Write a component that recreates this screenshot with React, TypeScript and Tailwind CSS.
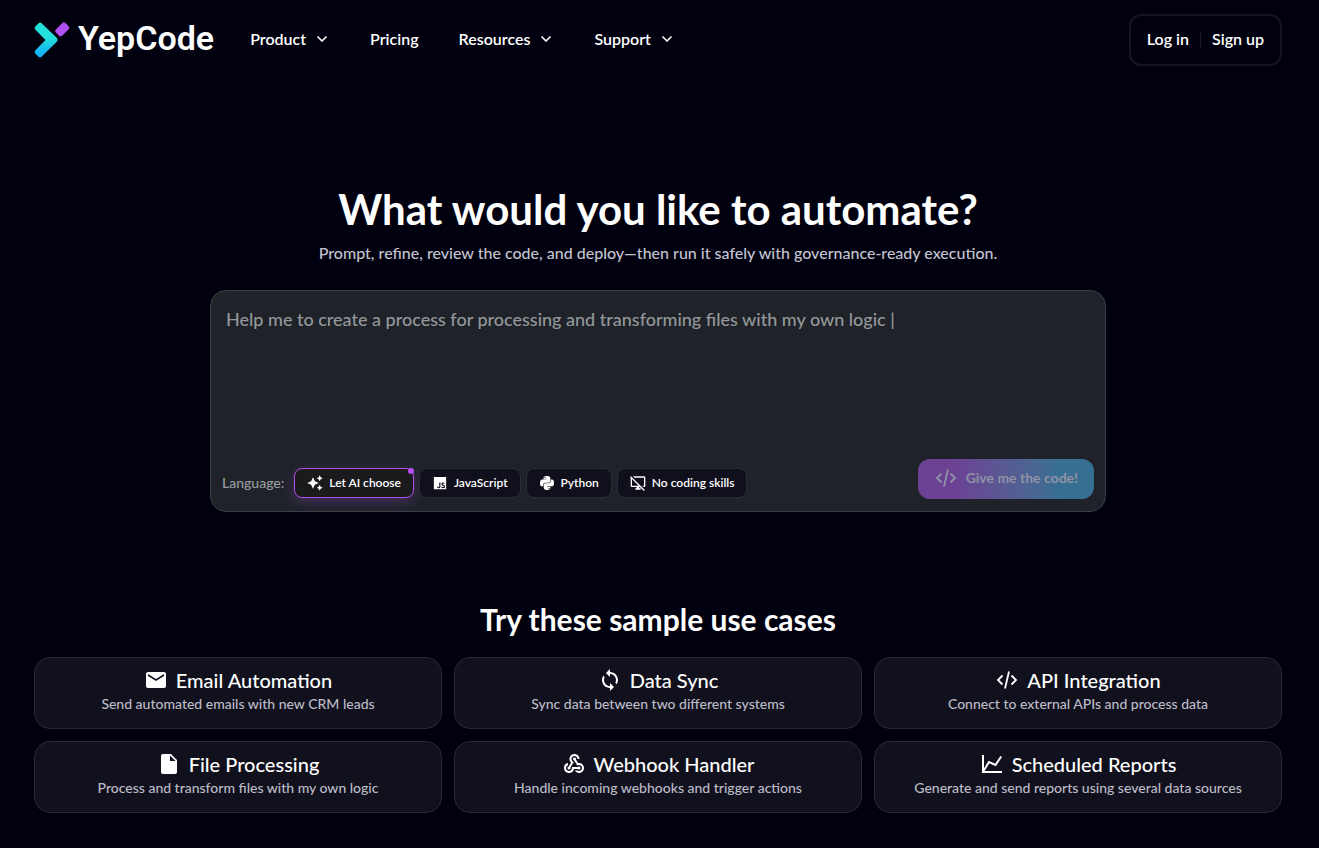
import { useState } from 'react'
import type { ReactNode } from 'react'
import { ChevronDown } from 'lucide-react'
import { FaPython } from 'react-icons/fa'
import { IoLogoJavascript } from 'react-icons/io5'
import {
  MdEmail,
  MdInsertDriveFile,
  MdOutlineDesktopAccessDisabled,
  MdSync,
  MdWebhook,
} from 'react-icons/md'

interface NavItem {
  label: string
  hasMenu?: boolean
}

interface Option {
  id: string
  label: string
  icon: ReactNode
}

interface UseCase {
  title: string
  description: string
  icon: ReactNode
}

function Logo() {
  return (
    <svg viewBox="0 0 36 36" className="size-9" fill="none" aria-hidden="true">
      <defs>
        <linearGradient id="arrow" x1="12" y1="0" x2="12" y2="36" gradientUnits="userSpaceOnUse">
          <stop offset="0.45" stopColor="#22e0dc" />
          <stop offset="0.85" stopColor="#12b4f4" />
        </linearGradient>
      </defs>
      <path
        d="M1.2 4.800 4.600 1.200Q6.100 0 7.600 1.200L22.500 15.500Q24.500 17.800 22.500 20.100L7.500 34.700Q6 36 4.500 34.700L1.200 31.400Q0 30 1.200 28.600L11.500 18 1.200 7.600Q0 6.200 1.200 4.800Z"
        fill="url(#arrow)"
      />
      <rect x="21.500" y="3.200" width="13.500" height="8.800" rx="2.200" transform="rotate(-45 28 7.500)" fill="#b150f0" />
    </svg>
  )
}

function CodeIcon({ className }: { className?: string }) {
  return (
    <svg viewBox="0 0 24 24" className={className} fill="none" stroke="currentColor" strokeWidth="1.8" aria-hidden="true">
      <path d="M7.500 7.500 3 12l4.500 4.500M16.500 7.500 21 12l-4.500 4.500M14 3.500l-4 17" />
    </svg>
  )
}

function ChartIcon({ className }: { className?: string }) {
  return (
    <svg viewBox="0 0 24 24" className={className} fill="none" stroke="currentColor" strokeWidth="2" aria-hidden="true">
      <path d="M3 3v17h19" />
      <path d="M3.500 19 9 10l6.500 3L21.200 4.500" />
    </svg>
  )
}

function SparklesIcon({ className }: { className?: string }) {
  return (
    <svg viewBox="0 0 24 24" className={className} fill="currentColor" aria-hidden="true">
      <path d="M9 3.500l2.800 5.700L17.500 12l-5.700 2.800L9 20.500l-2.800-5.700L.5 12l5.700-2.800z" />
      <path d="M19 .5l1.500 3L23.500 5l-3 1.500L19 9.500l-1.500-3L14.500 5l3-1.500zM19 14.500l1.500 3 3 1.500-3 1.500-1.500 3-1.500-3-3-1.500 3-1.500z" />
    </svg>
  )
}

const navItems: NavItem[] = [
  { label: 'Product', hasMenu: true },
  { label: 'Pricing' },
  { label: 'Resources', hasMenu: true },
  { label: 'Support', hasMenu: true },
]

const languages: Option[] = [
  { id: 'ai', label: 'Let AI choose', icon: <SparklesIcon className="size-4" /> },
  { id: 'js', label: 'JavaScript', icon: <IoLogoJavascript className="mx-px size-[14px]" /> },
  { id: 'python', label: 'Python', icon: <FaPython className="size-4" /> },
  { id: 'none', label: 'No coding skills', icon: <MdOutlineDesktopAccessDisabled className="size-4" /> },
]

const useCases: UseCase[] = [
  {
    title: 'Email Automation',
    description: 'Send automated emails with new CRM leads',
    icon: <MdEmail className="size-6" />,
  },
  {
    title: 'Data Sync',
    description: 'Sync data between two different systems',
    icon: <MdSync className="size-6" />,
  },
  {
    title: 'API Integration',
    description: 'Connect to external APIs and process data',
    icon: <CodeIcon className="size-6" />,
  },
  {
    title: 'File Processing',
    description: 'Process and transform files with my own logic',
    icon: <MdInsertDriveFile className="size-6" />,
  },
  {
    title: 'Webhook Handler',
    description: 'Handle incoming webhooks and trigger actions',
    icon: <MdWebhook className="size-6" />,
  },
  {
    title: 'Scheduled Reports',
    description: 'Generate and send reports using several data sources',
    icon: <ChartIcon className="size-6" />,
  },
]

function Header() {
  return (
    <header className="flex items-center justify-between pt-[14px]">
      <div className="flex items-center gap-9">
        <a href="#" className="flex items-center gap-2">
          <Logo />
          <span className="pb-1 font-['Roboto',sans-serif] text-[34px] leading-9 font-semibold">YepCode</span>
        </a>
        <nav className="flex items-center gap-10 pb-[2px] text-base font-semibold">
          {navItems.map(item =>
            item.hasMenu ? (
              <button key={item.label} type="button" className="flex items-center gap-2">
                {item.label}
                <ChevronDown className="size-4" strokeWidth={2.5} />
              </button>
            ) : (
              <a key={item.label} href="#">
                {item.label}
              </a>
            )
          )}
        </nav>
      </div>
      <div className="flex h-[52px] items-center rounded-xl border-2 border-[#14151f] px-4 pb-[2px] text-base font-semibold">
        <a href="#">Log in</a>
        <span className="mx-[11px] h-4 w-px bg-[#1a1b26]" />
        <a href="#">Sign up</a>
      </div>
    </header>
  )
}

function LanguagePicker() {
  const [selected, setSelected] = useState('ai')

  return (
    <div className="flex items-center gap-[5px]">
      <span className="mr-[5px] text-sm font-medium text-[#999da1]">Language:</span>
      {languages.map(lang => {
        const active = lang.id === selected
        return (
          <button
            key={lang.id}
            type="button"
            aria-pressed={active}
            onClick={() => setSelected(lang.id)}
            className={`relative flex h-[30px] items-center gap-[6px] rounded-lg border px-3 text-xs font-semibold ${
              active
                ? 'border-[#b150e8] bg-[#1b1b1d] shadow-[0_4px_12px_rgba(177,80,240,0.25)]'
                : 'border-[#2b2c36] bg-[#10101c]'
            }`}
          >
            {lang.icon}
            {lang.label}
            {active && <span className="absolute -top-[1px] -right-[1px] size-[6px] rounded-full bg-[#b84ff0]" />}
          </button>
        )
      })}
    </div>
  )
}

function PromptBox() {
  const [prompt, setPrompt] = useState('')

  return (
    <form
      className="mx-auto mt-[25px] w-full max-w-4xl rounded-2xl border border-[#3a3f47] bg-[#1f2329] px-[11px] pt-[14px] pb-3"
      onSubmit={e => e.preventDefault()}
    >
      <textarea
        aria-label="Prompt"
        value={prompt}
        onChange={e => setPrompt(e.target.value)}
        placeholder="Help me to create a process for processing and transforming files with my own logic |"
        className="block h-[154px] w-full resize-none bg-transparent px-1 text-lg font-medium outline-none placeholder:text-[#94989b]"
      />
      <div className="flex items-start justify-between">
        <div className="pt-[9px]">
          <LanguagePicker />
        </div>
        <button
          type="submit"
          className="flex h-10 items-center gap-2 rounded-xl bg-linear-to-r from-[#6b4194] from-20% to-[#376f93] to-80% px-4 pb-[2px] text-sm font-bold text-[#9192a5]"
        >
          <CodeIcon className="size-6" />
          Give me the code!
        </button>
      </div>
    </form>
  )
}

export default function App() {
  return (
    <div className="min-h-screen bg-[#00000e] pr-[3px] font-['Lato','Open_Sans',sans-serif] text-white">
      <div className="mx-auto max-w-[1280px] px-4">
        <Header />
        <main>
          <section className="pt-[119px] text-center">
            <h1 className="text-[42px] leading-12 font-bold">What would you like to automate?</h1>
            <p className="mt-2 text-base font-medium text-[#c4c4d0]">
              Prompt, refine, review the code, and deploy—then run it safely with governance-ready execution.
            </p>
          </section>
          <PromptBox />
          <section className="pt-[89px] pb-9">
            <h2 className="text-center text-[30px] leading-9 font-bold">Try these sample use cases</h2>
            <div className="mt-5 grid grid-cols-3 gap-3">
              {useCases.map(useCase => (
                <button
                  key={useCase.title}
                  type="button"
                  className="flex h-[72px] flex-col items-center rounded-2xl border border-[#282933] bg-[#11111d] pt-2"
                >
                  <span className="flex items-center gap-2 text-xl font-medium">
                    {useCase.icon}
                    {useCase.title}
                  </span>
                  <span className="text-sm font-medium text-[#bcbcc8]">{useCase.description}</span>
                </button>
              ))}
            </div>
          </section>
        </main>
      </div>
    </div>
  )
}
